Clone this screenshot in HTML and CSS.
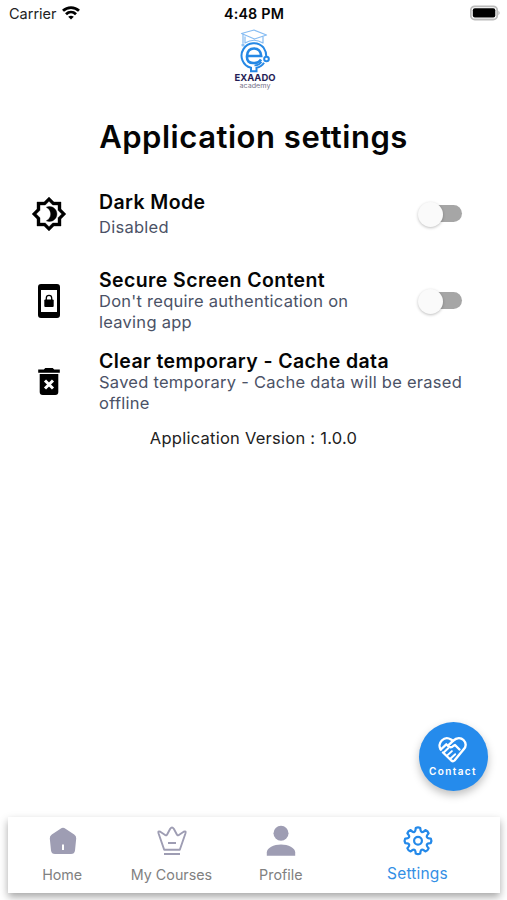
FILE: index.html
```html
<!DOCTYPE html>
<html lang="en">
<head>
<meta charset="utf-8">
<meta name="viewport" content="width=device-width, initial-scale=1">
<title>Application settings</title>
<link rel="stylesheet" href="styles.css">
</head>
<body>
<div class="screen">
  <header class="status">
    <div class="carrier"><span>Carrier</span>
      <svg width="18" height="14" viewBox="0 0 18 14" fill="none" stroke="#000" stroke-width="2.800"><path d="M1 4.800C5.500.500 12.500.500 17 4.800M4 8.300C6.900 5.500 11.100 5.500 14 8.300"/><path d="M9 13.500 6.200 10.700Q9 8.700 11.800 10.700Z" fill="#000" stroke="none"/></svg>
    </div>
    <time class="clock">4:48 PM</time>
    <div class="power">
      <svg width="31" height="16" viewBox="0 0 31 16"><rect x=".8" y="1.300" width="26.400" height="13.200" rx="4" fill="#fff" stroke="#bbb" stroke-width="1.800"/><rect x="2.800" y="3.300" width="22.500" height="9.200" rx="2" fill="#000"/><path d="M28.500 5.800q2.200 2.200 0 4.500z" fill="#aaa"/></svg>
    </div>
  </header>

  <svg class="logo" width="46" height="62" viewBox="0 0 46 62" fill="none">
    <g stroke="#86bcf2" stroke-width="1.200" stroke-linejoin="round"><path d="M9.500 5.500 22 2l12.500 5-12 4zM13 8.500V15q9-5.500 18 0V8.500M11 6.500v9"/><circle cx="11" cy="17" r="1"/></g>
    <g stroke="#2588e5" stroke-width="2"><path d="M31.500 19.500A12.500 12.500 0 1 0 19 39.800v3.500h5.500v-3.500q5-1 7.500-5M31.500 19.500q2.800 4 2.800 9"/><circle cx="34.500" cy="31" r="2.300"/><path d="M29.500 34q-2.500 3.500-7 3.300" stroke-width="1.800"/><path d="M15.500 28h13.700Q28.500 20.500 22 20.500t-7 7.500 7 7q5 0 7-3.500" stroke-width="2.600"/></g>
    <text class="brand" x="2.500" y="53" textLength="41" lengthAdjust="spacingAndGlyphs">EXAADO</text>
    <text class="brand-sub" x="7.500" y="60" textLength="31" lengthAdjust="spacingAndGlyphs">academy</text>
  </svg>

  <h1>Application settings</h1>

  <main class="settings">
    <section class="row row-dark">
      <svg class="glyph" width="36" height="36" viewBox="0 0 24 24"><path stroke="#000" stroke-width=".25" d="M20 8.690V4h-4.690L12 .690 8.690 4H4v4.690L.690 12 4 15.310V20h4.690L12 23.310 15.310 20H20v-4.690L23.310 12zm-2 5.790V18h-3.520L12 20.480 9.520 18H6v-3.520L3.520 12 6 9.520V6h3.520L12 3.520 14.480 6H18v3.520L20.480 12zM12.290 7c-.740 0-1.450.170-2.080.460 1.720.790 2.920 2.530 2.920 4.540s-1.200 3.750-2.920 4.540c.630.290 1.340.460 2.080.460 2.760 0 5-2.240 5-5s-2.240-5-5-5z"/></svg>
      <div class="copy"><h2>Dark Mode</h2><p>Disabled</p></div>
      <div class="switch" role="switch" aria-checked="false"><span></span></div>
    </section>
    <section class="row row-secure">
      <svg class="glyph" width="36" height="36" viewBox="0 0 36 36"><path fill-rule="evenodd" d="M10 1h16q3 0 3 3v28q0 3-3 3H10q-3 0-3-3V4q0-3 3-3zm0 6v22h16V7z"/><rect x="13.300" y="16.500" width="9.400" height="7.500" rx="1"/><path d="M15.300 17v-2a2.700 2.700 0 0 1 5.400 0v2" fill="none" stroke="#000" stroke-width="1.300"/></svg>
      <div class="copy"><h2>Secure Screen Content</h2><p>Don't require authentication on<br>leaving app</p></div>
      <div class="switch" role="switch" aria-checked="false"><span></span></div>
    </section>
    <section class="row row-cache">
      <svg class="glyph" width="36" height="36" viewBox="0 0 36 36"><path d="M7.200 5.500h5.600l1.500-1.500h7.400l1.500 1.500h5.600v3.300H7.200zM8.700 10h18.600v18q0 3-3 3H11.700q-3 0-3-3z"/><path d="m14 16.500 8 8m0-8-8 8" stroke="#fff" stroke-width="3"/></svg>
      <div class="copy"><h2>Clear temporary - Cache data</h2><p>Saved temporary - Cache data will be erased<br>offline</p></div>
    </section>
  </main>
  <p class="version">Application Version : 1.0.0</p>

  <button class="contact">
    <svg width="32" height="30" viewBox="0 0 32 30" fill="none" stroke="#fff" stroke-width="2.400" stroke-linecap="round" stroke-linejoin="round"><path d="M3.800 14.500C1.800 11.800 2.300 8 4.800 5.500s6-3 9.200-1l2 1.300c3.800-3.500 8-3.300 10.500-.8s3.200 6.500 0 9.500L17.500 25.500q-1.500 1.500-3.200 0L6 17.500"/><path d="m16 5.800-5.200 5c1.500 2 4 1.700 5.500.2l1.700-1 4.500 4.500M3.800 14.500l5.500-5.200"/><path d="m7 17.300 4.200-4M10.300 20.400l4.600-4.300M13.600 23.500l4.600-4.300" stroke-width="1.900"/></svg>
    <span>Contact</span>
  </button>

  <nav class="tabs">
    <a class="tab"><svg width="32" height="32" viewBox="0 0 32 32"><path d="M13.500 3.700q2.500-2 5 0l8.700 5.700q2.200 1.600 2 4l-1.200 12.100q-.5 3.500-4 3.500H8q-3.500 0-4-3.500L2.800 13.400q-.2-2.400 2-4z" fill="#9e9db3"/><path d="M16 19.500v5.500" stroke="#fff" stroke-width="2"/></svg><span>Home</span></a>
    <a class="tab"><svg width="32" height="32" viewBox="0 0 32 32" fill="none" stroke="#9e9db3" stroke-width="1.900" stroke-linejoin="round"><path d="M8.200 24.800 2.500 8.300q-.8-2.800 1.800-1.600l5.200 3.500q1 .6 1.500-.5l3.200-6q1.800-2.400 3.600 0l3.200 6q.5 1.100 1.500.5l5.200-3.500q2.600-1.200 1.800 1.600L23.800 24.800zM12 18h8M8 29h16"/></svg><span>My Courses</span></a>
    <a class="tab"><svg width="32" height="32" viewBox="0 0 32 32" fill="#9e9db3"><circle cx="16" cy="8.300" r="7.500"/><path d="M1.800 30.800v-3.300c0-4.700 7-8 14.200-8s14.200 3.300 14.200 8v3.300z"/></svg><span>Profile</span></a>
    <a class="tab active"><svg width="32" height="32" viewBox="0 0 32 32" fill="none" stroke="#2489e9" stroke-width="2.200" stroke-linejoin="round"><path transform="translate(16 15.800)" d="M-2.260-12.800Q0-14 2.260-12.800Q2.500-6 7.460-10.650Q9.900-9.900 10.650-7.460Q6-2.500 12.800-2.260Q14 0 12.800 2.260Q6 2.500 10.650 7.460Q9.900 9.900 7.460 10.650Q2.500 6 2.260 12.800Q0 14-2.260 12.800Q-2.500 6-7.460 10.650Q-9.900 9.900-10.650 7.460Q-6 2.500-12.800 2.260Q-14 0-12.800-2.260Q-6-2.500-10.650-7.460Q-9.900-9.900-7.460-10.650Q-2.500-6-2.260-12.800Z"/><circle cx="16" cy="15.800" r="3.900"/></svg><span>Settings</span></a>
  </nav>
</div>
</body>
</html>
```
FILE: styles.css
```css
* { box-sizing: border-box; }
body { margin: 0; background: #fff; font-family: Inter, "Liberation Sans", sans-serif; color: #050505; }
h1, h2, p { margin: 0; }
.screen { position: relative; height: 900px; display: flex; flex-direction: column; overflow: hidden; }

.status { height: 28px; display: grid; grid-template-columns: 1fr auto 1fr; padding: 0 6px 1px 9px; align-items: center; }
.carrier { display: flex; align-items: center; gap: 6px; font-size: 14.5px; color: #222; }
.carrier svg { margin: -1px 0 0 -1px; }
.clock { font-size: 14.3px; font-weight: 600; letter-spacing: .2px; margin-left: -2px; }
.power { display: flex; justify-content: flex-end; margin-top: -1px; }

.logo { align-self: center; margin-left: 2px; flex: none; }
.brand { font-size: 9.5px; font-weight: 700; fill: #251d55; }
.brand-sub { font-size: 6px; fill: #77748a; }

h1 { margin-top: 27px; height: 40px; line-height: 40px; text-align: center; font-size: 31px; font-weight: 600; letter-spacing: .53px; }

.settings { display: flex; flex-direction: column; padding: 0 45px 0 30.5px; margin-top: 30px; }
.row { display: flex; align-items: center; }
.row-dark { height: 54px; }
.row-secure { height: 64px; margin-top: 28px; }
.row-cache { height: 64px; margin-top: 17px; }
.glyph { flex: none; margin-right: 32.5px; }
.copy { flex: 1; white-space: nowrap; }
h2 { font-size: 19.5px; line-height: 22px; font-weight: 600; letter-spacing: .4px; }
.copy p { font-size: 16.5px; line-height: 21px; letter-spacing: .26px; color: #4b5266; }
.row-dark p { margin-top: 4px; }
.switch { position: relative; width: 44px; height: 26px; display: flex; align-items: center; }
.switch::before { content: ""; position: absolute; left: 6px; right: 0; top: 4px; height: 17px; border-radius: 9px; background: #a6a6a6; }
.switch span { position: relative; width: 25px; height: 25px; border-radius: 50%; background: #fafafa; box-shadow: 0 1px 3px rgba(0, 0, 0, .25); }
.version { margin-top: 12px; line-height: 24px; text-align: center; font-size: 16.5px; letter-spacing: .25px; color: #222; }

.contact { position: absolute; left: 418.5px; top: 721.5px; width: 69px; height: 69px; border: 0; padding: 13px 0 0; border-radius: 50%; background: #258bec; color: #fff; display: flex; flex-direction: column; align-items: center; font-family: inherit; box-shadow: 0 4px 8px rgba(0, 0, 0, .25); }
.contact span { font-size: 10px; line-height: 13px; font-weight: 600; letter-spacing: 1.4px; }

.tabs { margin: auto 7px 7px 8px; height: 76px; display: flex; background: #fff; box-shadow: 0 4px 8px rgba(0, 0, 0, .35); }
.tab { flex: 2; display: flex; flex-direction: column; align-items: center; padding-top: 8px; color: #818181; font-size: 14.3px; }
.tab span { line-height: 20px; margin: 8px 0 0 -1px; }
.tab.active { flex: 3; color: #348fe5; font-size: 15.5px; letter-spacing: .2px; }
.tab.active span { margin-top: 7px; }
```
